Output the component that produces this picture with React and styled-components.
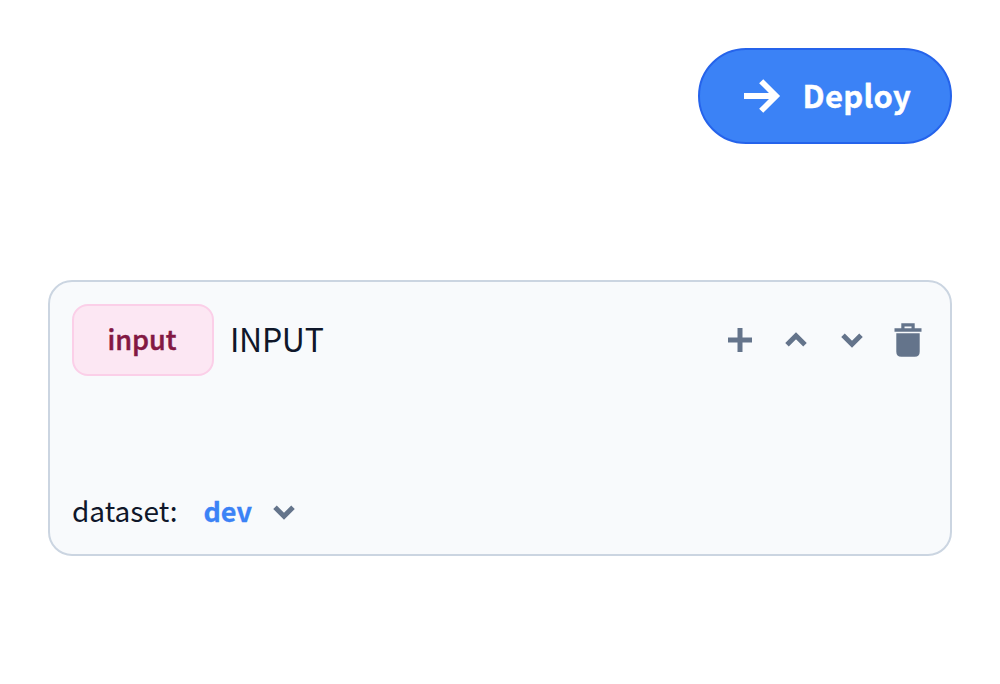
import React from "react";
import styled, { createGlobalStyle } from "styled-components";

const GlobalStyle = createGlobalStyle`
  * { box-sizing: border-box; }
  body { margin: 0; background: #fff; font-family: "Noto Sans CJK SC", "Noto Sans", sans-serif; color: #0f172a; }
`;

const Page = styled.main`
  width: 1000px;
  height: 684px;
  padding: 48px;
  display: flex;
  flex-direction: column;
`;

const Toolbar = styled.header`
  display: flex;
  justify-content: flex-end;
  margin-bottom: 136px;
`;

const DeployButton = styled.button`
  display: flex;
  align-items: center;
  gap: 20.5px;
  width: 254px;
  height: 96px;
  padding: 0 0 0 44px;
  border: 2px solid #2563eb;
  border-radius: 48px;
  background: #3b82f6;
  color: #fff;
  font-family: inherit;
`;

const Card = styled.section`
  display: flex;
  flex-direction: column;
  justify-content: space-between;
  height: 276px;
  padding: 22px;
  border: 2px solid #cbd5e1;
  border-radius: 24px;
  background: #f8fafc;
`;

const Row = styled.div`
  display: flex;
  align-items: center;
  height: ${(p) => p.$height}px;
`;

const Tag = styled.span`
  display: flex;
  align-items: center;
  justify-content: center;
  width: 142px;
  height: 72px;
  margin-right: 16px;
  padding-right: 2px;
  border: 2px solid #fbcfe8;
  border-radius: 16px;
  background: #fce7f3;
  color: #831843;
`;

const Label = styled.span`
  padding-bottom: ${(p) => p.$lift ?? 4}px;
  font-size: ${(p) => p.$size}px;
  font-weight: ${(p) => p.$weight || 400};
  letter-spacing: ${(p) => p.$spacing || 0}px;
  line-height: 36px;
  white-space: nowrap;
  color: ${(p) => p.$color || "inherit"};
  -webkit-text-stroke: ${(p) => p.$stroke || 0}px currentColor;
`;

const Actions = styled.div`
  display: flex;
  gap: 16px;
  margin-left: auto;
`;

const Icon = styled.svg`
  display: block;
  flex: none;
  width: 40px;
  height: 40px;
  fill: none;
  stroke: #64748b;
  stroke-width: 5;
`;

const ArrowIcon = styled(Icon)`
  width: 38px;
  stroke: #fff;
  stroke-width: 5.8;
`;

const Select = styled.div`
  display: flex;
  align-items: center;
  justify-content: space-between;
  width: 101px;
  margin-left: 26px;
`;

const ChevronDown = () => (
  <Icon viewBox="0 0 40 40"><path d="M11 15.3 20 24.3 29 15.3" /></Icon>
);

export default function App() {
  return (
    <>
      <GlobalStyle />
      <Page>
        <Toolbar>
          <DeployButton>
            <ArrowIcon viewBox="0 0 38 40">
              <path d="M0 20H33M17.2 5.2 32 20 17.2 34.8" />
            </ArrowIcon>
            <Label $size={31} $weight={700} $spacing={0.3} $stroke={0.4} $lift={2}>Deploy</Label>
          </DeployButton>
        </Toolbar>
        <Card>
          <Row $height={72}>
            <Tag><Label $size={27} $weight={500} $stroke={0.5} $lift={2}>input</Label></Tag>
            <Label $size={32} $spacing={-0.3}>INPUT</Label>
            <Actions>
              <Icon viewBox="0 0 40 40"><path d="M8 20H32M20 8V32" /></Icon>
              <Icon viewBox="0 0 40 40"><path d="M11 24.7 20 15.7 29 24.7" /></Icon>
              <ChevronDown />
              <Icon viewBox="0 0 40 40">
                <path fill="#64748b" stroke="none" fillRule="evenodd" d="M13.3 3.3H26.7V8.3H33.5V11.7H6.5V8.3H13.3ZM16.5 6.4V8.3H23.5V6.4ZM8.3 13.3H31.7V31.7Q31.7 36.7 26.7 36.7H13.3Q8.3 36.7 8.3 31.7Z" />
              </Icon>
            </Actions>
          </Row>
          <Row $height={40}>
            <Label $size={28}>dataset:</Label>
            <Select>
              <Label $size={27} $weight={700} $color="#3b82f6" $stroke={0.3} $lift={2}>dev</Label>
              <ChevronDown />
            </Select>
          </Row>
        </Card>
      </Page>
    </>
  );
}
